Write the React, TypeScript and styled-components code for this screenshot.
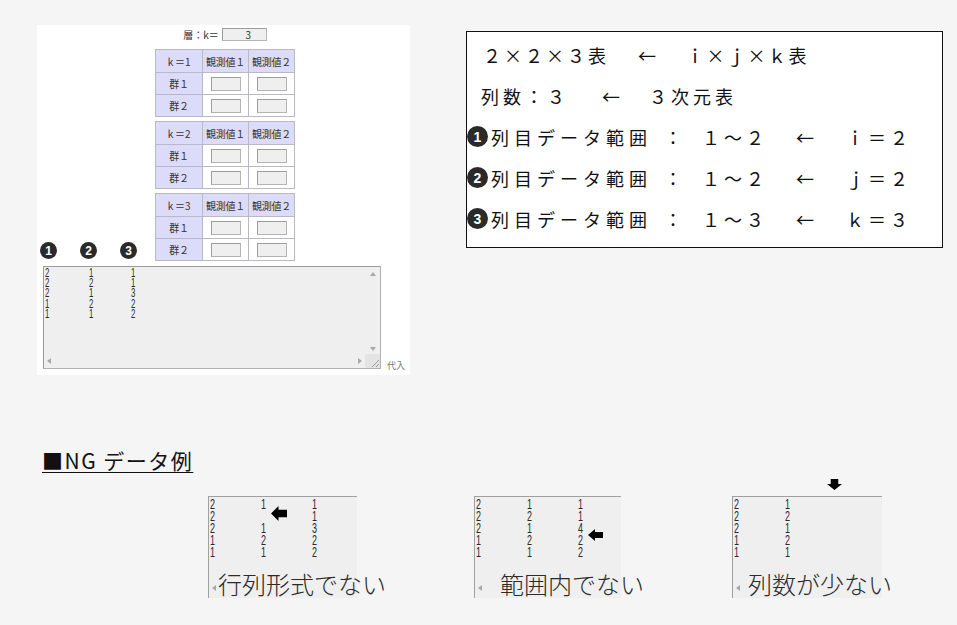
import styled, { createGlobalStyle } from "styled-components";

const GlobalStyle = createGlobalStyle`
  html, body {
    margin: 0;
    padding: 0;
  }
  body {
    background: #f5f5f5;
    font-family: "Noto Sans CJK JP", "Noto Sans", sans-serif;
    color: #222;
  }
`;

const Page = styled.div`
  width: 957px;
  height: 625px;
  overflow: hidden;
  box-sizing: border-box;
  padding: 25px 0 0 37px;
`;

const TopRow = styled.div`
  display: flex;
  align-items: flex-start;
  gap: 56px;
`;

/* ---------- left input panel ---------- */

const Panel = styled.div`
  width: 373px;
  height: 350px;
  box-sizing: border-box;
  background: #fff;
  padding: 3px 0 6px 3px;
  display: grid;
  grid-template-columns: 115px 140px 1fr;
  grid-template-rows: 13px auto 1fr;
  row-gap: 8px;
`;

const LayerRow = styled.div`
  grid-column: 2;
  justify-self: center;
  display: flex;
  align-items: center;
  gap: 3px;
  font-size: 10px;
  line-height: 13px;
  color: #333;
`;

const SmallInput = styled.div<{ $w: number; $h: number }>`
  width: ${(p) => p.$w}px;
  height: ${(p) => p.$h}px;
  box-sizing: border-box;
  background: #efefef;
  border: 1px solid #b4b4b4;
  border-top-color: #9c9c9c;
  border-left-color: #9c9c9c;
  font-size: 10px;
  line-height: 11px;
  text-align: center;
  padding-left: 8px;
  color: #333;
`;

const Tables = styled.div`
  grid-column: 2;
  display: flex;
  flex-direction: column;
  gap: 4px;
`;

const CrossTable = styled.div`
  display: grid;
  grid-template-columns: 46px 45px 45px;
  grid-template-rows: 22px 21px 21px;
  gap: 1px;
  padding: 1px;
  background: #b8b8c6;
  width: 140px;
  box-sizing: border-box;
`;

const Cell = styled.div<{ $head?: boolean }>`
  background: ${(p) => (p.$head ? "#dcdcfa" : "#fff")};
  display: flex;
  align-items: center;
  justify-content: center;
  font-size: 10px;
  color: #333;
  white-space: pre;
  letter-spacing: -0.2px;
`;

const Circles = styled.div`
  grid-column: 1;
  grid-row: 2;
  align-self: end;
  margin-bottom: 2px;
  display: flex;
  gap: 23px;
`;

const Badge = styled.span<{ $size: number; $font: number }>`
  flex: none;
  width: ${(p) => p.$size}px;
  height: ${(p) => p.$size}px;
  border-radius: 50%;
  background: #2a2a2a;
  color: #fff;
  display: inline-flex;
  align-items: center;
  justify-content: center;
  font-family: "Liberation Sans", Arial, sans-serif;
  font-weight: 700;
  font-size: ${(p) => p.$font}px;
  letter-spacing: 0;
`;

const AreaRow = styled.div`
  grid-column: 1 / -1;
  display: flex;
  align-items: flex-end;
  gap: 6px;
  padding-left: 3px;
  margin-top: -3px;
`;

const DataArea = styled.div`
  width: 338px;
  height: 103px;
  box-sizing: border-box;
  background: #efefef;
  border: 1px solid #b0b0b0;
  border-top-color: #9a9a9a;
  border-left-color: #9a9a9a;
  display: grid;
  grid-template-columns: 1fr 15px;
  grid-template-rows: 1fr 14px;
`;

const DataText = styled.div<{ $size: number; $line: number; $pad: number }>`
  padding: 1px 0 0 ${(p) => p.$pad}px;
  font-family: "Liberation Sans", Arial, sans-serif;
  font-size: ${(p) => p.$size}px;
  line-height: ${(p) => p.$line}px;
  color: #2a2a2a;
`;

const DataRow = styled.div`
  display: flex;
  height: inherit;
`;

const DataCell = styled.span<{ $w: number }>`
  width: ${(p) => p.$w}px;
  flex: none;
  display: inline-block;
  transform: scaleX(0.6);
  transform-origin: left center;
`;

const VScroll = styled.div`
  display: flex;
  flex-direction: column;
  justify-content: space-between;
  align-items: center;
  padding: 5px 0 3px;
`;

const HScroll = styled.div`
  display: flex;
  justify-content: space-between;
  align-items: center;
  padding: 0 3px 0 3px;
`;

const Corner = styled.div`
  background: #e4e4e4;
  display: flex;
  align-items: flex-end;
  justify-content: flex-end;
`;

const AssignLabel = styled.span`
  font-size: 9px;
  color: #777;
  margin-bottom: -3px;
`;

/* ---------- right explanation box ---------- */

const InfoBox = styled.div`
  margin-top: 6px;
  width: 477px;
  height: 217px;
  box-sizing: border-box;
  background: #fff;
  border: 1px solid #111;
  padding-top: 2px;
`;

const InfoLine = styled.div<{ $indent: number; $ls: number }>`
  display: flex;
  align-items: center;
  height: 41px;
  padding-left: ${(p) => p.$indent}px;
  font-size: 18px;
  letter-spacing: ${(p) => p.$ls}px;
  white-space: pre;
  color: #111;
`;

const Seg = styled.span<{ $w?: number; $ls?: number }>`
  flex: none;
  width: ${(p) => (p.$w ? `${p.$w}px` : "auto")};
  ${(p) => (p.$ls !== undefined ? `letter-spacing: ${p.$ls}px;` : "")}
`;

/* ---------- NG examples ---------- */

const NgTitle = styled.h2`
  margin: 73px 0 0 5px;
  font-size: 21px;
  line-height: 25px;
  font-weight: 400;
  color: #111;
  text-decoration: underline;
  text-decoration-thickness: 1px;
  text-underline-offset: 3px;
  letter-spacing: 1.5px;
`;

const NgRow = styled.div`
  display: flex;
  margin-top: 23px;
`;

const NgBox = styled.div<{ $ml: number; $w: number }>`
  position: relative;
  margin-left: ${(p) => p.$ml}px;
  width: ${(p) => p.$w}px;
  height: 102px;
  box-sizing: border-box;
  background: #efefef;
  border-top: 1px solid #a0a0a0;
  border-left: 1px solid #a0a0a0;
`;

const NgCaption = styled.div<{ $indent: number }>`
  margin-top: 12px;
  padding-left: ${(p) => p.$indent}px;
  font-size: 24px;
  line-height: 28px;
  white-space: nowrap;
  color: #2a2a2a;
  font-weight: 300;
`;

const Pointer = styled.svg<{ $left: number; $top: number }>`
  position: absolute;
  left: ${(p) => p.$left}px;
  top: ${(p) => p.$top}px;
`;

const TinyArrow = styled.svg`
  position: absolute;
  left: 3px;
  bottom: 7px;
`;

type Row = (number | string)[];

const mainData: Row[] = [
  [2, 1, 1],
  [2, 2, 1],
  [2, 1, 3],
  [1, 2, 2],
  [1, 1, 2],
];

const ngExamples = [
  {
    ml: 171,
    w: 149,
    indent: 9,
    caption: "行列形式でない",
    rows: [[2, 1, 1], [2, "", 1], [2, 1, 3], [1, 2, 2], [1, 1, 2]] as Row[],
    pointer: { dir: "left", left: 62, top: 9, w: 16, h: 15 },
  },
  {
    ml: 117,
    w: 147,
    indent: 25,
    caption: "範囲内でない",
    rows: [[2, 1, 1], [2, 2, 1], [2, 1, 4], [1, 2, 2], [1, 1, 2]] as Row[],
    pointer: { dir: "left", left: 113, top: 32, w: 15, h: 12 },
  },
  {
    ml: 111,
    w: 150,
    indent: 15,
    caption: "列数が少ない",
    rows: [[2, 1], [2, 2], [2, 1], [1, 2], [1, 1]] as Row[],
    pointer: { dir: "down", left: 94, top: -18, w: 15, h: 11 },
  },
];

const Tri = ({ dir }: { dir: "up" | "down" | "left" | "right" }) => {
  const d = {
    up: "M0 4 L3 0 L6 4 Z",
    down: "M0 0 L6 0 L3 4 Z",
    left: "M4 0 L4 6 L0 3 Z",
    right: "M0 0 L4 3 L0 6 Z",
  }[dir];
  const vert = dir === "up" || dir === "down";
  return (
    <svg width={vert ? 6 : 4} height={vert ? 4 : 6} viewBox={vert ? "0 0 6 4" : "0 0 4 6"}>
      <path d={d} fill="#a8a8a8" />
    </svg>
  );
};

const BlockArrow = ({
  dir,
  left,
  top,
  w,
  h,
}: {
  dir: string;
  left: number;
  top: number;
  w: number;
  h: number;
}) => (
  <Pointer
    $left={left}
    $top={top}
    width={w}
    height={h}
    viewBox={dir === "left" ? "0 0 16 14" : "0 0 14 12"}
    preserveAspectRatio="none"
  >
    {dir === "left" ? (
      <path d="M0 7 L7.5 0 L7.5 3.5 L16 3.5 L16 10.5 L7.5 10.5 L7.5 14 Z" fill="#000" />
    ) : (
      <path d="M7 12 L0 5.5 L3.5 5.5 L3.5 0 L10.5 0 L10.5 5.5 L14 5.5 Z" fill="#000" />
    )}
  </Pointer>
);

const Data = ({
  rows,
  size,
  line,
  pad,
  widths,
}: {
  rows: Row[];
  size: number;
  line: number;
  pad: number;
  widths: number[];
}) => (
  <DataText $size={size} $line={line} $pad={pad}>
    {rows.map((r, i) => (
      <DataRow key={i}>
        {r.map((v, j) => (
          <DataCell key={j} $w={widths[j] ?? 20}>
            {v === "" ? "\u00a0" : v}
          </DataCell>
        ))}
      </DataRow>
    ))}
  </DataText>
);

const ranges = [
  { n: 1, max: "２", v: "ｉ" },
  { n: 2, max: "２", v: "ｊ" },
  { n: 3, max: "３", v: "ｋ" },
];

export default function App() {
  return (
    <>
      <GlobalStyle />
      <Page>
        <TopRow>
          <Panel>
            <LayerRow>
              <span>層：k＝</span>
              <SmallInput $w={45} $h={13}>3</SmallInput>
            </LayerRow>

            <Tables>
              {[1, 2, 3].map((k) => (
                <CrossTable key={k}>
                  <Cell $head>{`k ＝${k}`}</Cell>
                  <Cell $head>観測値１</Cell>
                  <Cell $head>観測値２</Cell>
                  {[1, 2].flatMap((g) => [
                    <Cell $head key={"g" + g}>
                      群{g === 1 ? "１" : "２"}
                    </Cell>,
                    <Cell key={"a" + g}>
                      <SmallInput $w={30} $h={14} />
                    </Cell>,
                    <Cell key={"b" + g}>
                      <SmallInput $w={30} $h={14} />
                    </Cell>,
                  ])}
                </CrossTable>
              ))}
            </Tables>

            <Circles>
              <Badge $size={17} $font={12}>1</Badge>
              <Badge $size={17} $font={12}>2</Badge>
              <Badge $size={17} $font={12}>3</Badge>
            </Circles>

            <AreaRow>
              <DataArea>
                <Data rows={mainData} size={13} line={10.2} pad={1} widths={[44, 42, 20]} />
                <VScroll>
                  <Tri dir="up" />
                  <Tri dir="down" />
                </VScroll>
                <HScroll>
                  <Tri dir="left" />
                  <Tri dir="right" />
                </HScroll>
                <Corner>
                  <svg width="12" height="12" viewBox="0 0 12 12">
                    <path d="M11 4 L4 11 M11 8 L8 11" stroke="#9a9a9a" strokeWidth="1" />
                  </svg>
                </Corner>
              </DataArea>
              <AssignLabel>代入</AssignLabel>
            </AreaRow>
          </Panel>

          <InfoBox>
            <InfoLine $indent={16} $ls={3}>
              <Seg $w={155}>２×２×３表</Seg>
              <Seg $w={48}>←</Seg>
              <Seg $ls={2.5}>ｉ×ｊ×ｋ表</Seg>
            </InfoLine>
            <InfoLine $indent={14} $ls={4}>
              <Seg $w={121}>列数：３</Seg>
              <Seg $w={47}>←</Seg>
              <Seg>３次元表</Seg>
            </InfoLine>
            {ranges.map((r) => (
              <InfoLine $indent={0} $ls={4} key={r.n}>
                <Badge $size={21} $font={14}>
                  {r.n}
                </Badge>
                <Seg $w={3} />
                <Seg $w={173} $ls={5}>
                  列目データ範囲
                </Seg>
                <Seg $w={38}>：</Seg>
                <Seg $w={94}>１～{r.max}</Seg>
                <Seg $w={50}>←</Seg>
                <Seg>
                  {r.v}＝{r.max}
                </Seg>
              </InfoLine>
            ))}
          </InfoBox>
        </TopRow>

        <NgTitle>■NG データ例</NgTitle>

        <NgRow>
          {ngExamples.map((ex, i) => (
            <NgBox key={i} $ml={ex.ml} $w={ex.w}>
              <Data rows={ex.rows} size={15} line={12} pad={1} widths={[51, 51, 20]} />
              <NgCaption $indent={ex.indent}>{ex.caption}</NgCaption>
              <BlockArrow {...ex.pointer} />
              <TinyArrow width="4" height="6" viewBox="0 0 4 6">
                <path d="M4 0 L4 6 L0 3 Z" fill="#a8a8a8" />
              </TinyArrow>
            </NgBox>
          ))}
        </NgRow>
      </Page>
    </>
  );
}
